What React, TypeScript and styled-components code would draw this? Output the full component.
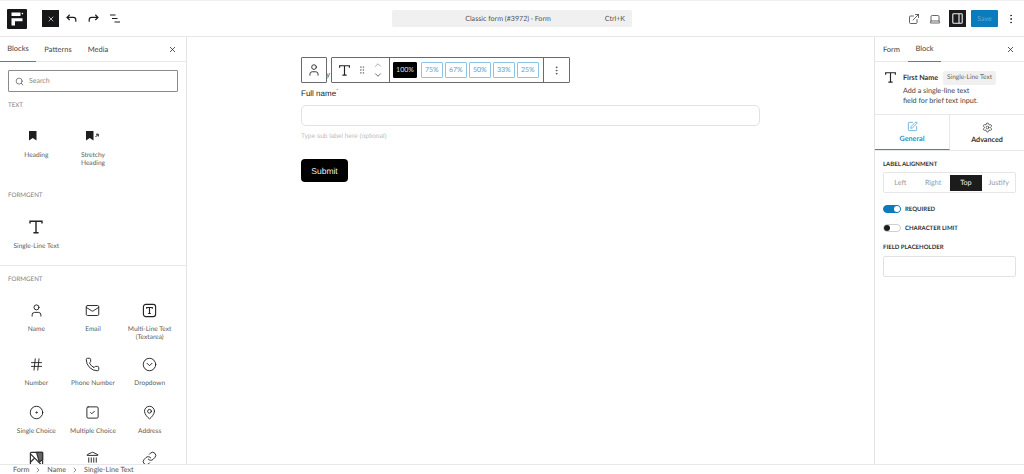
import React from "react";
import styled, { createGlobalStyle } from "styled-components";
import {
  Mail,
  Hash,
  Phone,
  CircleChevronDown,
  CircleDot,
  SquareCheck,
  MapPin,
  Landmark,
  Link as LinkIcon,
  User,
  X,
  Search,
  ExternalLink,
  Laptop,
  MoreVertical,
  ChevronUp,
  ChevronDown,
  GripVertical,
  SquarePen,
  Settings,
  ChevronRight,
} from "lucide-react";

const GlobalStyle = createGlobalStyle`
  html, body { margin: 0; padding: 0; background: #fff; }
  body {
    font-family: Lato, "Noto Sans", sans-serif;
    color: #2c2c2c;
    overflow: hidden;
    text-rendering: geometricPrecision;
  }
  * { box-sizing: border-box; }
`;

const SerifT = ({ size = 16 }: { size?: number }) => (
  <svg width={size} height={size} viewBox="0 0 16 16" fill="none" stroke="#222" strokeWidth="1.4">
    <path d="M2 4.5V2.2h12v2.3M8 2.2v11.4M5.4 13.7h5.2" />
  </svg>
);

const BoxT = () => (
  <svg width="15" height="15" viewBox="0 0 16 16" fill="none" stroke="#222" strokeWidth="1.2">
    <rect x="1.5" y="1.5" width="13" height="13" rx="2.5" />
    <path d="M5 6V4.8h6V6M8 4.8v6.4M6.6 11.2h2.8" />
  </svg>
);

const Bookmark = ({ arrow }: { arrow?: boolean }) => (
  <svg width="16" height="12" viewBox="0 0 16 12" fill="#1e1e1e">
    <path d="M1 1h7.5v9.5L4.75 8 1 10.5z" />
    {arrow && <path d="M10.5 7l2.5-2.5M11 4.2h2.3v2.3" stroke="#1e1e1e" strokeWidth="1" fill="none" />}
  </svg>
);

const ImageCut = () => (
  <svg width="15" height="15" viewBox="0 0 16 16" fill="none" stroke="#333" strokeWidth="1.3">
    <rect x="1.5" y="1.5" width="13" height="13" rx="1" />
    <path d="M8 1.5h6.5V9L11 12z" fill="#666" />
    <path d="M1.5 3l12 12M1.5 12l4-4" />
  </svg>
);

const Logo = () => (
  <svg width="20" height="20" viewBox="0 0 20 20">
    <rect width="20" height="20" rx="1" fill="#17171a" />
    <path d="M4.5 3.5h9v3.6h-9zM4.5 9.2h11v3H8v4.3H4.5z" fill="#fff" />
    <circle cx="15.4" cy="4.6" r="0.8" fill="#fff" />
  </svg>
);

const UndoIcon = ({ flip }: { flip?: boolean }) => (
  <svg width="11" height="9" viewBox="0 0 11 9" fill="none" stroke="#1e1e1e" strokeWidth="1.2" transform={flip ? "scale(-1 1)" : undefined}>
    <path d="M3.7 0.8L1 3.4l2.7 2.6M1 3.4h6.5c1.4 0 2.3 1 2.3 2.4v2" />
  </svg>
);

const ListIcon = () => (
  <svg width="10" height="9" viewBox="0 0 10 9" stroke="#1e1e1e" strokeWidth="1.1">
    <path d="M0 1h5.5M2 4.5h5.5M4.5 8H10" />
  </svg>
);

const PanelIcon = () => (
  <svg width="11" height="11" viewBox="0 0 11 11" fill="none" stroke="#eee" strokeWidth="1.1">
    <rect x="0.8" y="0.8" width="9.4" height="9.4" rx="0.8" />
    <path d="M7 0.8v9.4" />
  </svg>
);

const Page = styled.div`
  width: 1024px;
  height: 474px;
  display: flex;
  flex-direction: column;
  overflow: hidden;
  border-top: 1px solid #f0f0f0;
`;

const Header = styled.header`
  height: 36px;
  flex: none;
  display: flex;
  align-items: center;
  border-bottom: 1px solid #e8e8e8;
  padding: 0 7px;
`;

const Group = styled.div`
  width: 340px;
  display: flex;
  align-items: center;
`;

const CloseSquare = styled.div`
  width: 17px;
  height: 17px;
  margin: 0 2px 0 15px;
  background: #17171a;
  color: #ddd;
  display: flex;
  align-items: center;
  justify-content: center;
`;

const IconSlot = styled.div<{ $w?: number }>`
  width: ${(p) => p.$w ?? 21.5}px;
  display: flex;
  align-items: center;
  justify-content: center;
`;

const Command = styled.div`
  width: 240px;
  height: 17px;
  margin-left: 45px;
  background: #f0f0f0;
  border-radius: 2px;
  font-size: 7.1px;
  color: #555;
  display: flex;
  align-items: center;
  justify-content: center;
  padding-right: 8px;
  position: relative;
`;

const Shortcut = styled.span`
  position: absolute;
  right: 7px;
`;

const HeaderRight = styled.div`
  margin-left: auto;
  display: flex;
  align-items: center;
`;

const ToggleSquare = styled.div`
  width: 17px;
  height: 17px;
  margin: 0 5px 0 3px;
  background: #1c1c1f;
  display: flex;
  align-items: center;
  justify-content: center;
`;

const SaveButton = styled.div`
  width: 27px;
  height: 17px;
  background: #0a7cbd;
  color: #5fa9d6;
  font-size: 7px;
  display: flex;
  align-items: center;
  justify-content: center;
  border-radius: 1px;
  margin-right: 7px;
`;

const Body = styled.div`
  flex: 1;
  min-height: 0;
  display: flex;
`;

const Inserter = styled.aside`
  width: 187px;
  flex: none;
  border-right: 1px solid #e4e4e4;
  overflow: hidden;
`;

const Tabs = styled.div`
  height: 25px;
  display: flex;
  align-items: center;
  border-bottom: 1px solid #e8e8e8;
  padding-right: 9px;
`;

const Tab = styled.div<{ $active?: boolean; $w?: number }>`
  width: ${(p) => p.$w ?? 33}px;
  height: 25px;
  display: flex;
  align-items: center;
  justify-content: center;
  font-size: 7.5px;
  color: #444;
  border-bottom: ${(p) => (p.$active ? "1.5px solid #2a8fc4" : "none")};
`;

const TabClose = styled.div`
  margin-left: auto;
  display: flex;
  color: #222;
`;

const SearchBox = styled.div`
  margin: 8px 8px 0;
  height: 22px;
  border: 1px solid #8a8a8a;
  border-radius: 1px;
  display: flex;
  align-items: center;
  gap: 5px;
  padding-left: 6px;
  font-size: 7px;
  color: #8a8a8a;
`;

const SectionLabel = styled.div<{ $top?: number }>`
  font-size: 6.2px;
  line-height: 9px;
  color: #808080;
  padding-left: 8px;
  margin-top: ${(p) => p.$top ?? 0}px;
`;

const BlockGrid = styled.div<{ $top: number }>`
  display: grid;
  grid-template-columns: repeat(3, 1fr);
  padding: 0 8px;
  margin-top: ${(p) => p.$top}px;
`;

const BlockItem = styled.div<{ $h: number }>`
  height: ${(p) => p.$h}px;
  display: flex;
  flex-direction: column;
  align-items: center;
  font-size: 6.6px;
  line-height: 8px;
  color: #5c5c5c;
  text-align: center;
  white-space: nowrap;
`;

const BlockIcon = styled.div`
  height: 16px;
  margin-bottom: 7px;
  display: flex;
  align-items: center;
  justify-content: center;
  color: #222;
`;

const Divider = styled.div`
  border-top: 1px solid #e8e8e8;
`;

const Canvas = styled.main`
  flex: 1;
  min-width: 0;
  position: relative;
  padding: 51px 0 0 114px;
`;

const FloatToolbar = styled.div`
  position: absolute;
  left: 114px;
  top: 20px;
  display: flex;
  align-items: stretch;
  gap: 4px;
`;

const HiddenTitle = styled.span`
  position: absolute;
  left: 25px;
  top: 12px;
  font-size: 8px;
  color: #555;
`;

const ToolCard = styled.div`
  height: 26px;
  background: #fff;
  border: 1px solid #6a6a6a;
  border-radius: 1px;
  display: flex;
  align-items: center;
  position: relative;
`;

const ToolCell = styled.div<{ $w: number; $line?: boolean }>`
  width: ${(p) => p.$w}px;
  height: 100%;
  display: flex;
  align-items: center;
  justify-content: center;
  border-right: ${(p) => (p.$line ? "1px solid #6a6a6a" : "none")};
`;

const Grip = styled.span`
  display: flex;
  margin: 0 6px;
  color: #555;
`;

const Mover = styled.div`
  display: flex;
  flex-direction: column;
  color: #555;
`;

const Widths = styled.div`
  height: 100%;
  padding: 0 0 0 3px;
  width: 154px;
  display: flex;
  align-items: center;
  gap: 2.5px;
  border-right: 1px solid #6a6a6a;
`;

const WidthButton = styled.div<{ $on?: boolean }>`
  width: ${(p) => (p.$on ? 24 : 21.5)}px;
  height: 16px;
  border: 1px solid ${(p) => (p.$on ? "#000" : "#8cc4e2")};
  background: ${(p) => (p.$on ? "#000" : "#fff")};
  color: ${(p) => (p.$on ? "#ddd" : "#5aa2cc")};
  margin-right: ${(p) => (p.$on ? 1.5 : 0)}px;
  border-radius: 1px;
  font-size: 7px;
  display: flex;
  align-items: center;
  justify-content: center;
`;

const FieldLabel = styled.div`
  font-family: "Liberation Sans", sans-serif;
  font-size: 8px;
  line-height: 11px;
  color: #222;
  sup {
    color: #e25c5c;
    font-size: 5px;
    line-height: 0;
  }
`;

const FieldInput = styled.div`
  width: 459px;
  height: 21px;
  margin-top: 6px;
  border: 1px solid #e2e2e2;
  border-radius: 5px;
`;

const SubLabel = styled.div`
  font-family: "Liberation Sans", sans-serif;
  font-size: 6.5px;
  line-height: 9px;
  color: #bdbdbd;
  margin-top: 6px;
`;

const SubmitButton = styled.div`
  width: 47px;
  height: 23px;
  margin-top: 18px;
  background: #000;
  border-radius: 4px;
  color: #eee;
  font-family: "Liberation Sans", sans-serif;
  font-size: 8.5px;
  display: flex;
  align-items: center;
  justify-content: center;
`;

const SettingsPanel = styled.aside`
  width: 150px;
  flex: none;
  border-left: 1px solid #e4e4e4;
`;

const BlockCard = styled.div`
  display: flex;
  gap: 6px;
  padding: 9px 9px 0;
  height: 52px;
`;

const CardText = styled.div`
  font-size: 7.2px;
  line-height: 10px;
  color: #444;
`;

const CardTitle = styled.div`
  display: flex;
  align-items: center;
  gap: 5px;
  font-weight: 700;
  color: #333;
  margin-bottom: 1px;
`;

const Badge = styled.span`
  background: #f0f0f0;
  padding: 2px 4px;
  border-radius: 2px;
  font-size: 6.5px;
  font-weight: 400;
  color: #666;
`;

const SubTabs = styled.div`
  display: grid;
  grid-template-columns: 75px 1fr;
  height: 37px;
  border-top: 1px solid #e8e8e8;
  border-bottom: 1px solid #e8e8e8;
`;

const SubTab = styled.div<{ $active?: boolean }>`
  display: flex;
  flex-direction: column;
  align-items: center;
  justify-content: center;
  gap: 2px;
  font-size: 7.2px;
  font-weight: 700;
  color: ${(p) => (p.$active ? "#2a8fc4" : "#333")};
  border-right: ${(p) => (p.$active ? "1px solid #e8e8e8" : "none")};
  border-bottom: ${(p) => (p.$active ? "1.5px solid #2a8fc4" : "none")};
`;

const Options = styled.div`
  padding: 10px 8px 0;
`;

const OptionLabel = styled.div<{ $top?: number }>`
  font-size: 6px;
  line-height: 8px;
  color: #333;
  font-weight: 700;
  margin-top: ${(p) => p.$top ?? 0}px;
`;

const Segments = styled.div`
  margin-top: 3px;
  height: 21px;
  border: 1px solid #e6e6e6;
  border-radius: 2px;
  display: grid;
  grid-template-columns: repeat(4, 1fr);
  align-items: center;
`;

const Segment = styled.div<{ $on?: boolean }>`
  height: ${(p) => (p.$on ? 16 : 19)}px;
  display: flex;
  align-items: center;
  justify-content: center;
  font-size: 7.2px;
  background: ${(p) => (p.$on ? "#1c1c1c" : "transparent")};
  color: ${(p) => (p.$on ? "#eee" : "#999")};
`;

const ToggleRow = styled.div<{ $top: number }>`
  display: flex;
  align-items: center;
  gap: 4px;
  margin-top: ${(p) => p.$top}px;
  font-size: 6px;
  font-weight: 700;
  color: #333;
`;

const Switch = styled.div<{ $on?: boolean }>`
  width: 18px;
  height: 8px;
  border-radius: 4px;
  border: 1px solid ${(p) => (p.$on ? "#0a7cbd" : "#cfcfcf")};
  background: ${(p) => (p.$on ? "#0a7cbd" : "#fff")};
  position: relative;
  &::after {
    content: "";
    position: absolute;
    top: 0;
    left: ${(p) => (p.$on ? "10px" : "0")};
    width: 6px;
    height: 6px;
    border-radius: 50%;
    background: ${(p) => (p.$on ? "#fff" : "#1c1c1c")};
  }
`;

const PlaceholderInput = styled.div`
  margin-top: 4px;
  height: 21px;
  border: 1px solid #e2e2e2;
  border-radius: 2px;
`;

const Breadcrumbs = styled.footer`
  height: 10px;
  flex: none;
  background: #fff;
  border-top: 1px solid #e8e8e8;
  display: flex;
  align-items: center;
  gap: 5px;
  padding-left: 13px;
  font-size: 7.2px;
  color: #555;
`;

const ic = { size: 15, strokeWidth: 1.5, color: "#222" };

const textBlocks: { key: string; name: React.ReactNode; icon: React.ReactNode }[] = [
  { key: "heading", name: "Heading", icon: <Bookmark /> },
  { key: "stretchy", name: <>Stretchy<br />Heading</>, icon: <Bookmark arrow /> },
];

const formBlocks: { name?: React.ReactNode; icon: React.ReactNode }[] = [
  { name: "Name", icon: <User {...ic} /> },
  { name: "Email", icon: <Mail {...ic} /> },
  { name: <>Multi-Line Text<br />(Textarea)</>, icon: <BoxT /> },
  { name: "Number", icon: <Hash {...ic} /> },
  { name: "Phone Number", icon: <Phone {...ic} /> },
  { name: "Dropdown", icon: <CircleChevronDown {...ic} /> },
  { name: "Single Choice", icon: <CircleDot {...ic} /> },
  { name: "Multiple Choice", icon: <SquareCheck {...ic} /> },
  { name: "Address", icon: <MapPin {...ic} /> },
  { icon: <ImageCut /> },
  { icon: <Landmark {...ic} /> },
  { icon: <LinkIcon {...ic} /> },
];

const rowHeights = [54, 48, 46, 46];
const widths = ["100%", "75%", "67%", "50%", "33%", "25%"];

export default function App() {
  return (
    <Page>
      <GlobalStyle />
      <Header>
        <Group>
          <Logo />
          <CloseSquare>
            <X size={8} strokeWidth={2.4} />
          </CloseSquare>
          <IconSlot><UndoIcon /></IconSlot>
          <IconSlot><UndoIcon flip /></IconSlot>
          <IconSlot><ListIcon /></IconSlot>
        </Group>
        <Command>
          Classic form (#3972) · Form
          <Shortcut>Ctrl+K</Shortcut>
        </Command>
        <HeaderRight>
          <IconSlot><ExternalLink size={12} strokeWidth={1.4} color="#222" /></IconSlot>
          <IconSlot><Laptop size={12} strokeWidth={1.4} color="#222" /></IconSlot>
          <ToggleSquare><PanelIcon /></ToggleSquare>
          <SaveButton>Save</SaveButton>
          <MoreVertical size={12} strokeWidth={1.6} color="#222" />
        </HeaderRight>
      </Header>
      <Body>
        <Inserter>
          <Tabs>
            <Tab $active $w={36}>Blocks</Tab>
            <Tab $w={44}>Patterns</Tab>
            <Tab $w={36}>Media</Tab>
            <TabClose><X size={9} strokeWidth={2} /></TabClose>
          </Tabs>
          <SearchBox>
            <Search size={9} strokeWidth={1.6} color="#333" />
            Search
          </SearchBox>
          <SectionLabel $top={9}>TEXT</SectionLabel>
          <BlockGrid $top={18}>
            {textBlocks.map((b) => (
              <BlockItem key={b.key} $h={63}>
                <BlockIcon>{b.icon}</BlockIcon>
                {b.name}
              </BlockItem>
            ))}
          </BlockGrid>
          <SectionLabel>FORMGENT</SectionLabel>
          <BlockGrid $top={19}>
            <BlockItem $h={46}>
              <BlockIcon><SerifT /></BlockIcon>
              Single-Line Text
            </BlockItem>
          </BlockGrid>
          <Divider />
          <SectionLabel $top={9}>FORMGENT</SectionLabel>
          <BlockGrid $top={18}>
            {formBlocks.map((b, i) => (
              <BlockItem key={i} $h={rowHeights[Math.floor(i / 3)]}>
                <BlockIcon>{b.icon}</BlockIcon>
                {b.name}
              </BlockItem>
            ))}
          </BlockGrid>
        </Inserter>
        <Canvas>
          <FloatToolbar>
            <HiddenTitle>y</HiddenTitle>
            <ToolCard>
              <ToolCell $w={24}><User size={14} strokeWidth={1.5} color="#222" /></ToolCell>
            </ToolCard>
            <ToolCard>
              <ToolCell $w={58} $line>
                <SerifT size={13} />
                <Grip><GripVertical size={10} strokeWidth={1.2} /></Grip>
                <Mover>
                  <ChevronUp size={10} strokeWidth={1.2} />
                  <ChevronDown size={10} strokeWidth={1.6} color="#222" />
                </Mover>
              </ToolCell>
              <Widths>
                {widths.map((w, i) => (
                  <WidthButton key={w} $on={i === 0}>{w}</WidthButton>
                ))}
              </Widths>
              <ToolCell $w={25}><MoreVertical size={11} strokeWidth={1.6} color="#444" /></ToolCell>
            </ToolCard>
          </FloatToolbar>
          <FieldLabel>Full name<sup>*</sup></FieldLabel>
          <FieldInput />
          <SubLabel>Type sub label here (optional)</SubLabel>
          <SubmitButton>Submit</SubmitButton>
        </Canvas>
        <SettingsPanel>
          <Tabs>
            <Tab $w={33}>Form</Tab>
            <Tab $active $w={33}>Block</Tab>
            <TabClose><X size={9} strokeWidth={2} /></TabClose>
          </Tabs>
          <BlockCard>
            <SerifT size={13} />
            <CardText>
              <CardTitle>First Name <Badge>Single-Line Text</Badge></CardTitle>
              Add a single-line text<br />field for brief text input.
            </CardText>
          </BlockCard>
          <SubTabs>
            <SubTab $active><SquarePen size={11} strokeWidth={1.4} color="#2a8fc4" />General</SubTab>
            <SubTab><Settings size={11} strokeWidth={1.4} color="#222" />Advanced</SubTab>
          </SubTabs>
          <Options>
            <OptionLabel>LABEL ALIGNMENT</OptionLabel>
            <Segments>
              <Segment>Left</Segment>
              <Segment>Right</Segment>
              <Segment $on>Top</Segment>
              <Segment>Justify</Segment>
            </Segments>
            <ToggleRow $top={12}><Switch $on />REQUIRED</ToggleRow>
            <ToggleRow $top={11}><Switch />CHARACTER LIMIT</ToggleRow>
            <OptionLabel $top={12}>FIELD PLACEHOLDER</OptionLabel>
            <PlaceholderInput />
          </Options>
        </SettingsPanel>
      </Body>
      <Breadcrumbs>
        Form <ChevronRight size={8} strokeWidth={2} /> Name <ChevronRight size={8} strokeWidth={2} /> Single-Line Text
      </Breadcrumbs>
    </Page>
  );
}
